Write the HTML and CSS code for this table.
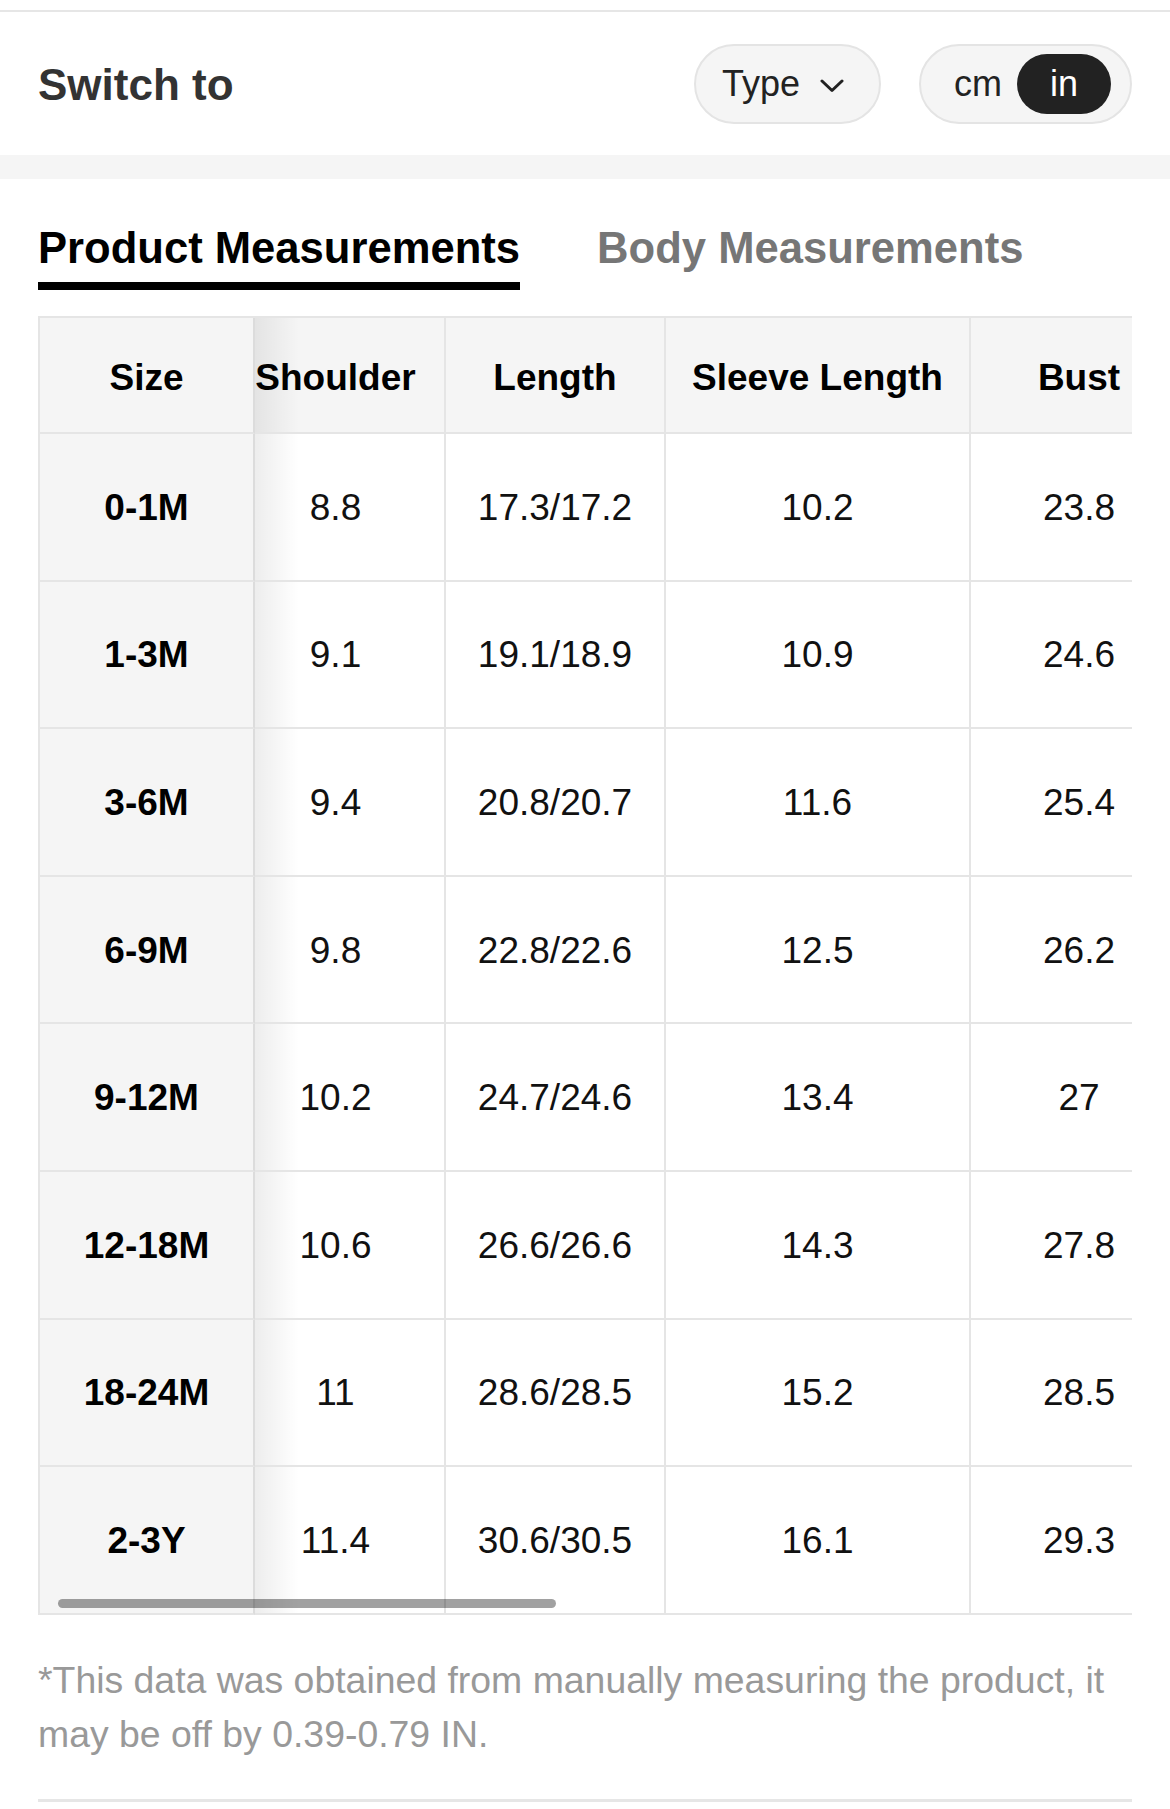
FILE: index.html
```html
<!DOCTYPE html>
<html lang="en">
<head>
<meta charset="utf-8">
<title>Size Guide</title>
<link rel="stylesheet" href="styles.css">
</head>
<body>
<div class="topline"></div>
<header class="switch-bar">
  <h2 class="switch-title">Switch to</h2>
  <div class="controls">
    <button class="type-pill">Type<svg class="chev" width="24" height="14" viewBox="0 0 24 14"><path d="M2 2 L12 11.5 L22 2" fill="none" stroke="#222" stroke-width="3" stroke-linecap="round" stroke-linejoin="round"/></svg></button>
    <div class="unit-toggle"><span class="unit">cm</span><span class="unit unit-active">in</span></div>
  </div>
</header>
<div class="band"></div>
<section class="guide">
  <nav class="tabs">
    <span class="tab tab-active">Product Measurements</span>
    <span class="tab">Body Measurements</span>
  </nav>
  <div class="scroll">
    <div class="grid">
      <div class="cell head size">Size</div>
      <div class="cell head shoulder">Shoulder</div>
      <div class="cell head">Length</div>
      <div class="cell head">Sleeve Length</div>
      <div class="cell head">Bust</div>

      <div class="cell size">0-1M</div><div class="cell shoulder">8.8</div><div class="cell">17.3/17.2</div><div class="cell">10.2</div><div class="cell">23.8</div>
      <div class="cell size">1-3M</div><div class="cell shoulder">9.1</div><div class="cell">19.1/18.9</div><div class="cell">10.9</div><div class="cell">24.6</div>
      <div class="cell size">3-6M</div><div class="cell shoulder">9.4</div><div class="cell">20.8/20.7</div><div class="cell">11.6</div><div class="cell">25.4</div>
      <div class="cell size">6-9M</div><div class="cell shoulder">9.8</div><div class="cell">22.8/22.6</div><div class="cell">12.5</div><div class="cell">26.2</div>
      <div class="cell size">9-12M</div><div class="cell shoulder">10.2</div><div class="cell">24.7/24.6</div><div class="cell">13.4</div><div class="cell">27</div>
      <div class="cell size">12-18M</div><div class="cell shoulder">10.6</div><div class="cell">26.6/26.6</div><div class="cell">14.3</div><div class="cell">27.8</div>
      <div class="cell size">18-24M</div><div class="cell shoulder">11</div><div class="cell">28.6/28.5</div><div class="cell">15.2</div><div class="cell">28.5</div>
      <div class="cell size">2-3Y</div><div class="cell shoulder">11.4</div><div class="cell">30.6/30.5</div><div class="cell">16.1</div><div class="cell">29.3</div>
    </div>
    <div class="scroll-thumb"></div>
  </div>
  <p class="note">*This data was obtained from manually measuring the product, it may be off by 0.39-0.79 IN.</p>
  <div class="bottomline"></div>
</section>
</body>
</html>
```
FILE: styles.css
```css
* { box-sizing: border-box; }
html, body { margin: 0; padding: 0; background: #fff; }
body {
  font-family: "Liberation Sans", Arial, Helvetica, sans-serif;
  color: #000;
  width: 1170px;
}
.topline { margin-top: 10px; height: 2px; background: #e6e6e6; }

.switch-bar {
  height: 143px;
  display: flex;
  align-items: center;
  padding: 0 38px;
}
.switch-title {
  margin: 0;
  padding-top: 2px;
  font-size: 44px;
  font-weight: 700;
  color: #333;
  line-height: 50px;
}
.controls {
  margin-left: auto;
  display: flex;
  align-items: center;
  gap: 38px;
}
.type-pill {
  height: 80px;
  border: 2px solid #e4e4e4;
  background: #f5f5f5;
  border-radius: 40px;
  padding: 0 35px 0 26px;
  font-family: inherit;
  font-size: 36px;
  color: #222;
  display: flex;
  align-items: center;
  line-height: 1;
}
.chev { margin-left: 20px; margin-top: 4px; }
.unit-toggle {
  height: 80px;
  border: 2px solid #e4e4e4;
  background: #f5f5f5;
  border-radius: 40px;
  display: flex;
  align-items: center;
  padding: 0 19px 0 33px;
  gap: 15px;
  font-size: 36px;
  color: #222;
}
.unit { line-height: 60px; }
.unit-active {
  background: #222;
  color: #fff;
  border-radius: 30px;
  height: 60px;
  padding: 0 33px;
}
.band { height: 24px; background: #f5f5f5; }

.guide { padding: 0 38px; }
.tabs {
  display: flex;
  gap: 77px;
  padding-top: 44px;
}
.tab {
  font-size: 43.6px;
  font-weight: 700;
  line-height: 50px;
  color: #767676;
  padding-bottom: 9px;
  border-bottom: 8px solid transparent;
}
.tab-active { color: #000; border-bottom-color: #000; }

.scroll {
  position: relative;
  margin-top: 26px;
  width: 1094px;
  overflow: hidden;
}
.grid {
  display: grid;
  width: 1151px;
  grid-template-columns: 215px 191px 220px 305px 218px;
  grid-template-rows: 116px repeat(8, 147.6px);
  border-top: 2px solid #e5e5e5;
  border-left: 2px solid #e5e5e5;
}
.cell {
  display: flex;
  align-items: center;
  justify-content: center;
  padding-top: 2px;
  border-right: 2px solid #e5e5e5;
  border-bottom: 2px solid #e5e5e5;
  font-size: 37px;
  color: #111;
  background: #fff;
  white-space: nowrap;
}
.head { background: #f5f5f5; font-weight: 700; color: #000; padding-top: 5px; }
.size { background: #f5f5f5; font-weight: 700; color: #000; border-right-color: #dcdcdc; }
.shoulder {
  padding-right: 28px;
  background-image: linear-gradient(to right, rgba(0,0,0,0.07), rgba(0,0,0,0) 44px);
}
.scroll-thumb {
  position: absolute;
  left: 20px;
  bottom: 7px;
  width: 498px;
  height: 9px;
  border-radius: 5px;
  background: rgba(0,0,0,0.37);
}
.note {
  margin: 38px 0 0;
  font-size: 37.4px;
  line-height: 54px;
  color: #999;
}
.bottomline { margin-top: 38px; height: 3px; background: #e6e6e6; }
```
